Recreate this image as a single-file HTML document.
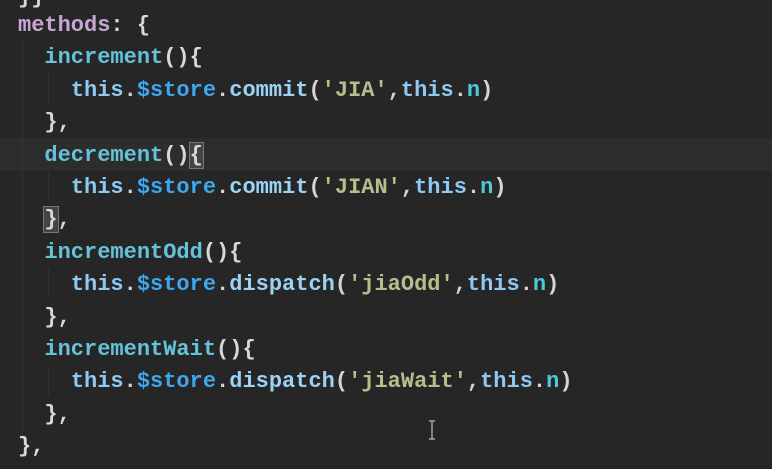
<!DOCTYPE html>
<html><head><style>
html,body{margin:0;padding:0;background:#262626;width:772px;height:469px;overflow:hidden}
.hl{position:absolute;left:0;top:138px;width:772px;height:33px;background:#2d2d2d}
.g{position:absolute;width:1px;background:#333;}
pre{position:absolute;left:18px;top:10px;margin:0;font-family:"Liberation Mono",monospace;font-size:22px;line-height:32.4px;color:#d4d4d4;font-weight:bold;letter-spacing:0}
.p{color:#c7a5d6}.f{color:#64c3d8}.t{color:#8fc8f0}.s{color:#3da8f0}.m{color:#9cd3f5}.q{color:#b3c08c}.n{color:#4ec9d8}.b{color:#d8d8d8}
.box{outline:1px solid #777;background:#444}
.cur{position:absolute;left:428px;top:420px;width:8px;height:20px}
</style></head><body>
<div class="hl"></div>
<div class="g" style="left:22px;top:40px;height:400px"></div>
<div class="g" style="left:48px;top:74px;height:30px"></div>
<div class="g" style="left:48px;top:172px;height:30px"></div>
<div class="g" style="left:48px;top:268px;height:30px"></div>
<div class="g" style="left:48px;top:366px;height:30px"></div>
<pre><span class="p">methods</span><span class="b">: {</span>
  <span class="f">increment</span><span class="b">(){</span>
    <span class="t">this</span>.<span class="s">$store</span>.<span class="m">commit</span>(<span class="q">'JIA'</span>,<span class="t">this</span>.<span class="n">n</span>)
  <span class="b">},</span>
  <span class="f">decrement</span><span class="b">()<span class="box">{</span></span>
    <span class="t">this</span>.<span class="s">$store</span>.<span class="m">commit</span>(<span class="q">'JIAN'</span>,<span class="t">this</span>.<span class="n">n</span>)
  <span class="b"><span class="box">}</span>,</span>
  <span class="f">incrementOdd</span><span class="b">(){</span>
    <span class="t">this</span>.<span class="s">$store</span>.<span class="m">dispatch</span>(<span class="q">'jiaOdd'</span>,<span class="t">this</span>.<span class="n">n</span>)
  <span class="b">},</span>
  <span class="f">incrementWait</span><span class="b">(){</span>
    <span class="t">this</span>.<span class="s">$store</span>.<span class="m">dispatch</span>(<span class="q">'jiaWait'</span>,<span class="t">this</span>.<span class="n">n</span>)
  <span class="b">},</span>
<span class="b">},</span></pre>
<svg class="cur" viewBox="0 0 8 20" width="8" height="20"><path d="M1 1h6M4 1v18M1 19h6" stroke="#bbb" stroke-width="1.2" fill="none"/></svg>
<div style="position:absolute;left:18px;top:-15px;font:bold 22px 'Liberation Mono',monospace;color:#d8d8d8">}}</div>
</body></html>
